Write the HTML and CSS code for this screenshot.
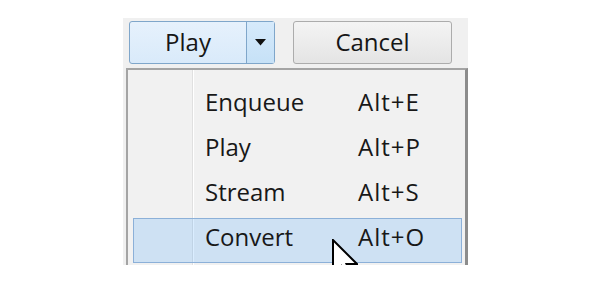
FILE: index.html
```html
<!DOCTYPE html>
<html lang="en">

<head>
    <meta charset="UTF-8">
    <title>Play menu</title>
    <link rel="stylesheet" href="styles.css">
</head>

<body>
    <div class="dialog">
        <div class="button-row">
            <div class="split-button">
                <div class="split-main">Play</div>
                <div class="split-arrow">
                    <svg width="11" height="7" viewBox="0 0 11 7">
                        <polygon points="0,0 11,0 5.5,6.5" fill="#111" />
                    </svg>
                </div>
            </div>
            <div class="button">Cancel</div>
        </div>

        <div class="menu">
            <div class="menu-item"><span class="label">Enqueue</span><span class="shortcut">Alt+E</span></div>
            <div class="menu-item"><span class="label">Play</span><span class="shortcut">Alt+P</span></div>
            <div class="menu-item"><span class="label">Stream</span><span class="shortcut">Alt+S</span></div>
            <div class="menu-item active"><span class="label">Convert</span><span class="shortcut">Alt+O</span></div>
        </div>

        <svg class="cursor" width="26" height="42" viewBox="0 0 26 42">
            <path d="M1 1 L1 35 L9.5 27 L15 40 L20 37.5 L14.5 25 L25 25 Z" fill="#fff" stroke="#000"
                stroke-width="2" stroke-linejoin="miter" />
        </svg>
    </div>
</body>

</html>
```

FILE: styles.css
```css
* {
    margin: 0;
    padding: 0;
    box-sizing: border-box;
    font-family: 'Open Sans', 'Noto Sans', sans-serif;
}

body {
    background-color: #fff;
}

.dialog {
    position: relative;
    width: 345px;
    height: 247px;
    margin: 18px 0 0 123px;
    background-color: #f0f0f0;
    overflow: hidden;
}

.button-row {
    display: flex;
    gap: 18px;
    padding: 3px 0 0 6px;
}

.split-button {
    display: flex;
    width: 146px;
    height: 43px;
    border: 1px solid #7fa6ca;
    border-radius: 3px;
    background: linear-gradient(#e6f1fc, #d9eafa);
}

.split-main {
    flex: 1;
    display: flex;
    align-items: center;
    justify-content: center;
    padding-bottom: 3px;
    font-size: 24px;
    color: #161616;
}

.split-arrow {
    width: 28px;
    display: flex;
    align-items: center;
    justify-content: center;
    border-left: 1px solid #7fa6ca;
    background: linear-gradient(#d6eafb, #c6e1f7);
}

.button {
    width: 159px;
    height: 43px;
    display: flex;
    align-items: center;
    justify-content: center;
    padding-bottom: 3px;
    border: 1px solid #acacac;
    border-radius: 3px;
    background: linear-gradient(#f4f4f4, #e4e4e4);
    font-size: 24px;
    color: #161616;
}

.menu {
    width: 342px;
    height: 240px;
    margin: 4px 0 0 3px;
    padding-top: 13px;
    border: 2px solid #a4a4a4;
    border-right: 3px solid #8c8c8c;
    border-bottom: none;
    background: linear-gradient(to right,
            #f1f1f1 64px, #e0e0e0 64px, #e0e0e0 65px,
            #ffffff 65px, #ffffff 66px, #f1f1f1 66px);
}

.menu-item {
    display: flex;
    align-items: center;
    height: 45px;
    margin: 0 3px 0 5px;
    padding: 0 0 9px 71px;
    border: 1px solid transparent;
    font-size: 24px;
    color: #181818;
}

.menu-item.active {
    background-color: rgba(51, 153, 255, 0.18);
    border-color: #8cb0d8;
}

.label {
    width: 153px;
}

.shortcut {
    letter-spacing: 1px;
}

.cursor {
    position: absolute;
    left: 209px;
    top: 221px;
}
```
